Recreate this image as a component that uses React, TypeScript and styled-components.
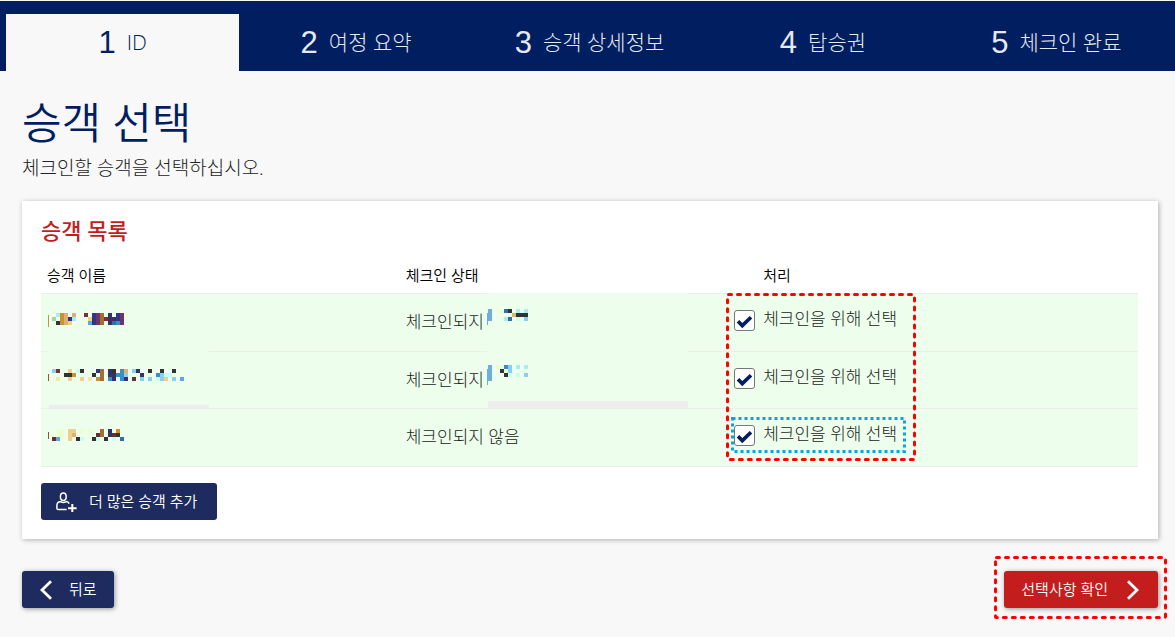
import React, { useState } from 'react';
import styled, { createGlobalStyle } from 'styled-components';

const navy = '#001e60';
const red = '#c41d1d';
const mint = '#edffec';
const line = '#ededed';

const GlobalStyle = createGlobalStyle`
  * { box-sizing: border-box; }
  body {
    margin: 0;
    background: #f8f8f8;
    color: #222;
    font-family: 'Open Sans', 'Noto Sans CJK KR', sans-serif;
    font-weight: 300;
  }
`;

const StepBar = styled.ol`
  display: flex;
  margin: 0;
  padding: 13px 2px 0 6px;
  list-style: none;
  background: ${navy};
  border-top: 1px solid #f8f8f8;
`;

const Step = styled.li<{ $active?: boolean }>`
  flex: 1 1 0;
  display: flex;
  align-items: center;
  justify-content: center;
  gap: 11px;
  height: 57px;
  font-size: 21px;
  line-height: 30px;
  white-space: nowrap;
  color: ${(p) => (p.$active ? navy : '#e6e9f0')};
  background: ${(p) => (p.$active ? '#f8f8f8' : 'transparent')};
`;

const StepNumber = styled.span`
  font-family: 'Liberation Sans', sans-serif;
  font-size: 31px;
  font-weight: 400;
`;

const StepLabel = styled.span`
  padding-bottom: 2px;
`;

const Main = styled.main`
  padding: 28px 17px 29px 22px;
`;

const Title = styled.h1`
  margin: 0;
  font-size: 43px;
  line-height: 48px;
  font-weight: 350;
  color: ${navy};
`;

const Lead = styled.p`
  margin: 8px 0 20px;
  font-size: 19px;
  line-height: 26px;
`;

const Card = styled.section`
  padding: 15px 20px 19px 19px;
  background: #fff;
  box-shadow: 1px 1px 5px rgba(0, 0, 0, 0.3);
`;

const CardTitle = styled.h2`
  margin: 0 0 13px;
  font-size: 22px;
  line-height: 28px;
  font-weight: 500;
  color: ${red};
`;

const Table = styled.table`
  width: 100%;
  table-layout: fixed;
  border-spacing: 0;
  text-align: left;
`;

const HeadCell = styled.th<{ $width: string; $indent: number }>`
  width: ${(p) => p.$width};
  height: 37px;
  padding: 0 0 0 ${(p) => p.$indent}px;
  border-bottom: 1px solid ${line};
  font-size: 15px;
  line-height: 20px;
  font-weight: 350;
  color: #000;
`;

const Row = styled.tr`
  height: 58px;
  &:nth-child(even) {
    height: 57px;
  }
`;

const Cell = styled.td<{ $indent: number }>`
  position: relative;
  padding: 0 0 1px ${(p) => p.$indent}px;
  border-bottom: 1px solid ${line};
  background: ${mint};
  font-size: 17px;
  line-height: 24px;
  white-space: nowrap;
`;

const Choice = styled.label`
  position: relative;
  display: inline-flex;
  align-items: center;
  gap: 8px;
`;

const BoxWrap = styled.span`
  position: relative;
  display: flex;
  svg {
    position: absolute;
    inset: 0;
    pointer-events: none;
  }
`;

const Box = styled.input`
  appearance: none;
  width: 21px;
  height: 21px;
  margin: 0;
  background: #fff;
  border: 1px solid #777;
  border-radius: 3px;
`;

const ChoiceText = styled.span`
  padding-bottom: 3px;
`;

const Overlay = styled.svg<{ $left: number; $top: number }>`
  position: absolute;
  z-index: 1;
  left: ${(p) => p.$left}px;
  top: ${(p) => p.$top}px;
  pointer-events: none;
`;

const Button = styled.button<{ $tone?: 'red'; $raised?: boolean }>`
  display: inline-flex;
  align-items: center;
  height: 37px;
  padding: 0 17px;
  border: 0;
  border-radius: 3px;
  background: ${(p) => (p.$tone === 'red' ? red : '#1e2b5f')};
  box-shadow: ${(p) => (p.$raised ? '1px 1px 5px rgba(0, 0, 0, 0.4)' : 'none')};
  color: #fff;
  font-family: inherit;
  font-size: 15px;
  line-height: 20px;
  font-weight: 350;
  white-space: nowrap;
  cursor: pointer;
`;

const ButtonText = styled.span`
  padding-bottom: 2px;
`;

const AddButton = styled(Button)`
  gap: 12px;
  margin-top: 16px;
  padding: 0 20px 0 15px;
`;

const Actions = styled.div`
  display: flex;
  justify-content: space-between;
  margin-top: 32px;
`;

const BackButton = styled(Button)`
  gap: 16px;
`;

const ConfirmWrap = styled.div`
  position: relative;
`;

const ConfirmButton = styled(Button)`
  gap: 18px;
  padding: 0 18px 0 17px;
`;

const palette: Record<string, string> = {
  k: '#333333', n: '#333368', v: '#333388', p: '#6b3565', r: '#7d2f33',
  m: '#663030', o: '#c9942f', t: '#e0b070', w: '#a56c33', y: '#f0d088',
  e: '#f0e8a8', l: '#ecffcc', c: '#a8eef0', a: '#c8fff0', s: '#88d0f0',
  b: '#5ba9e0', d: '#3070a8', u: '#3390c8', g: '#a8d0a8',
};

function Mosaic({ x, y, rows }: { x: number; y: number; rows: string[] }) {
  return (
    <g shapeRendering="crispEdges">
      {rows.flatMap((row, j) =>
        [...row].map((ch, i) =>
          palette[ch] ? (
            <rect key={`${j}-${i}`} x={x + i * 4} y={y + j * 4} width="4" height="4" fill={palette[ch]} />
          ) : null,
        ),
      )}
    </g>
  );
}

const NameMosaic = () => (
  <Overlay $left={7} $top={0} width="162" height="160" aria-hidden="true">
    <rect x="1" y="0" width="160" height="115" fill={mint} />
    <rect x="1" y="111" width="160" height="4" fill={line} />
    <rect x="0" y="21" width="1" height="12" fill="#c9942f" />
    <Mosaic x={4} y={19} rows={['.cot.t..r.vpw.n.vp', 'g.otvc...yvpwrnnvp', '.koty....bvpw.ndup']} />
    <rect x="0" y="80" width="1" height="7" fill="#a05020" />
    <Mosaic
      x={4}
      y={75}
      rows={[
        'sr..y.ak...vw.nk.ut.sn..k..k..k',
        '...kko....k.w.nnuus...n...usaa',
        '.e..y..y.e.ow.un.un.m.s.s.asy.s.b',
      ]}
    />
    <rect x="0" y="138" width="1" height="7" fill="#a05020" />
    <Mosaic x={4} y={135} rows={['.ll.yy.l.l..w.n.o', '.ll.yt.....mw.nmk', 'mb..y.ka..ka.k.a.d']} />
  </Overlay>
);

const StatusMosaic = () => (
  <Overlay $left={87} $top={-1} width="201" height="117" aria-hidden="true">
    <rect x="0" y="0" width="201" height="115" fill={mint} />
    <rect x="1" y="108" width="200" height="8" fill={line} />
    <rect x="0" y="20" width="1" height="12" fill="#6bb0dc" />
    <rect x="1" y="16" width="4" height="12" fill="#6bb0dc" />
    <Mosaic x={1} y={16} rows={['..l.dk.c.c', '......tkkk', '....cd.a.s']} />
    <rect x="0" y="76" width="1" height="16" fill="#6bb0dc" />
    <rect x="1" y="72" width="4" height="16" fill="#6bb0dc" />
    <Mosaic x={1} y={72} rows={['..l.us.c.c', '...kls', '....ka.a.s']} />
  </Overlay>
);

function DashedFrame({ left, top, width, height }: { left: number; top: number; width: number; height: number }) {
  return (
    <Overlay $left={left} $top={top} width={width} height={height} aria-hidden="true">
      <rect
        x="1.5" y="1.5" width={width - 3} height={height - 3} rx="1"
        fill="none" stroke="#fe0000" strokeWidth="3" strokeLinecap="round" strokeDasharray="3 6"
      />
    </Overlay>
  );
}

const FocusDots = () => (
  <Overlay $left={-3} $top={-5} width="175" height="36" aria-hidden="true">
    <rect x="1.5" y="1.5" width="172" height="33" fill="none" stroke="#05a5df" strokeWidth="3" strokeDasharray="3 3" />
  </Overlay>
);

const AddPersonIcon = () => (
  <svg width="21" height="20" viewBox="0 0 21 20" fill="none" stroke="#fff" aria-hidden="true">
    <ellipse cx="7.3" cy="4.8" rx="2.9" ry="3.7" strokeWidth="1.5" />
    <path d="M10.6 17.6H2.2Q.9 17.6.9 16.2V13.6Q.9 10.2 4.4 9.6Q7.3 11.4 10.2 9.6Q12.4 10 13.2 11.6" strokeWidth="1.5" />
    <path d="M16.3 12v8M12 16.3h8.6" strokeWidth="2" />
  </svg>
);

const Chevron = ({ flip }: { flip?: boolean }) => (
  <svg width="14" height="20" viewBox="0 0 14 20" fill="none" stroke="#fff" strokeWidth="2.8" aria-hidden="true">
    <path d={flip ? 'M2 1.2 11 10 2 18.8' : 'M12 1.2 3 10 12 18.8'} />
  </svg>
);

const steps = ['ID', '여정 요약', '승객 상세정보', '탑승권', '체크인 완료'];

export default function App() {
  const [selected, setSelected] = useState([true, true, true]);
  const toggle = (i: number) => setSelected(selected.map((v, j) => (i === j ? !v : v)));

  return (
    <>
      <GlobalStyle />
      <StepBar>
        {steps.map((label, i) => (
          <Step key={label} $active={i === 0}>
            <StepNumber>{i + 1}</StepNumber>
            <StepLabel>{label}</StepLabel>
          </Step>
        ))}
      </StepBar>
      <Main>
        <Title>승객 선택</Title>
        <Lead>체크인할 승객을 선택하십시오.</Lead>
        <Card>
          <CardTitle>승객 목록</CardTitle>
          <Table>
            <thead>
              <tr>
                <HeadCell $width="32.7%" $indent={6}>승객 이름</HeadCell>
                <HeadCell $width="30.4%" $indent={6}>체크인 상태</HeadCell>
                <HeadCell $width="auto" $indent={30}>처리</HeadCell>
              </tr>
            </thead>
            <tbody>
              {selected.map((on, i) => (
                <Row key={i}>
                  <Cell $indent={6}>{i === 0 && <NameMosaic />}</Cell>
                  <Cell $indent={6}>
                    {i < 2 ? '체크인되지' : '체크인되지 않음'}
                    {i === 0 && <StatusMosaic />}
                  </Cell>
                  <Cell $indent={1}>
                    <Choice>
                      <BoxWrap>
                        <Box type="checkbox" checked={on} onChange={() => toggle(i)} />
                        {on && (
                          <svg width="21" height="21" viewBox="0 0 21 21" fill="none" aria-hidden="true">
                            <path d="M4 11.2 8.3 15.6 17 7.2" stroke={navy} strokeWidth="3.6" />
                          </svg>
                        )}
                      </BoxWrap>
                      <ChoiceText>체크인을 위해 선택</ChoiceText>
                      {i === 2 && <FocusDots />}
                    </Choice>
                    {i === 0 && <DashedFrame left={-7} top={-1} width={190} height={168} />}
                  </Cell>
                </Row>
              ))}
            </tbody>
          </Table>
          <AddButton type="button">
            <AddPersonIcon />
            <ButtonText>더 많은 승객 추가</ButtonText>
          </AddButton>
        </Card>
        <Actions>
          <BackButton type="button" $raised>
            <Chevron />
            <ButtonText>뒤로</ButtonText>
          </BackButton>
          <ConfirmWrap>
            <ConfirmButton type="button" $tone="red" $raised>
              <ButtonText>선택사항 확인</ButtonText>
              <Chevron flip />
            </ConfirmButton>
            <DashedFrame left={-10} top={-15} width={173} height={63} />
          </ConfirmWrap>
        </Actions>
      </Main>
    </>
  );
}
